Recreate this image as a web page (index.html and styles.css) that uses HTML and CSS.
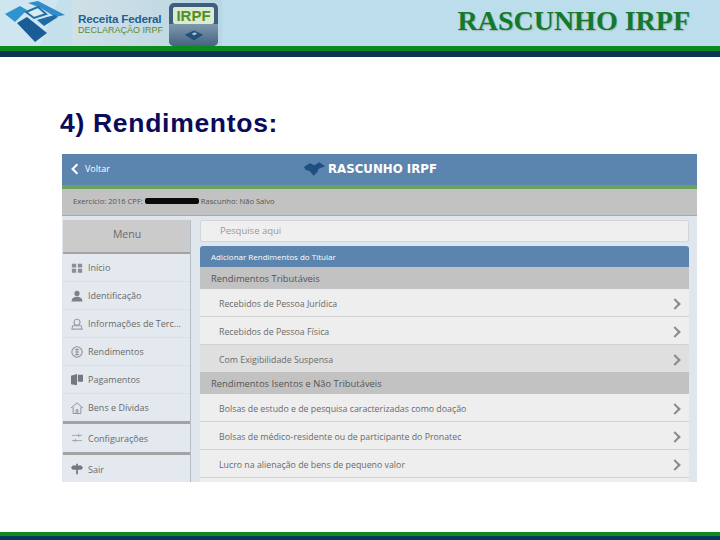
FILE: index.html
```html
<!DOCTYPE html>
<html lang="pt-BR">
<head>
    <meta charset="UTF-8">
    <title>Rascunho IRPF</title>
    <link rel="stylesheet" href="styles.css">
</head>
<body>
    <header class="slide-header">
        <div class="brand">
            <svg class="brand-logo" viewBox="0 0 72 46">
                <polygon points="58,0 72,0 72,46 40,46" fill="#c4e0ec"/>
                <polygon points="5,14 20,6 27,10 15,22" fill="#2f93cf"/>
                <polygon points="28,3 38,1 65,15 55,17 41,8" fill="#2f8cc8"/>
                <polygon points="26,12 38,7 46,14 34,18" fill="#d8ecf4" stroke="#2470a8" stroke-width="2"/>
                <polygon points="37,20 47,17 55,15 58,17 44,26" fill="#1f6ba6"/>
                <polygon points="17,23 27,17 47,33 35,42" fill="#1a5c96"/>
            </svg>
            <div class="brand-plate">
                <div class="brand-text">
                    <span class="brand-name">Receita Federal</span>
                    <span class="brand-sub">DECLARAÇÃO IRPF</span>
                </div>
                <div class="irpf-badge">
                    <span class="irpf-label">IRPF</span>
                    <span class="irpf-base">
                        <svg viewBox="0 0 24 12" width="20" height="11">
                            <polygon points="1,5 12,0 23,5 12,12" fill="#234f78"/>
                            <polygon points="9,4 13,2 16,4 12,6" fill="#a9c0d2"/>
                        </svg>
                    </span>
                </div>
            </div>
        </div>
        <div class="slide-title">RASCUNHO IRPF</div>
    </header>
    <div class="stripe"></div>

    <main class="slide-body">
        <h1 class="heading">4) Rendimentos:</h1>

        <div class="shot">
            <div class="app-bar">
                <div class="back">
                    <svg viewBox="0 0 10 14" width="8" height="12"><path d="M8 1 L2 7 L8 13" fill="none" stroke="#fff" stroke-width="2.6"/></svg>
                    <span>Voltar</span>
                </div>
                <div class="app-title">
                    <svg viewBox="0 0 24 16" width="23" height="16">
                        <polygon points="1,6 7,2 12,4 17,1 23,5 16,8 15,11 11,15 7,10 3,9" fill="#1f4f82"/>
                    </svg>
                    <span>RASCUNHO IRPF</span>
                </div>
            </div>
            <div class="info-bar">
                <span>Exercício: 2016 CPF:</span>
                <span class="redacted"></span>
                <span>Rascunho: Não Salvo</span>
            </div>

            <div class="app-main">
                <nav class="side">
                    <div class="side-head">Menu</div>
                    <a class="side-item">
                        <svg class="side-icon" viewBox="0 0 14 14"><path d="M1 2h5v4.500H1zM8 2h5v4.500H8zM1 8h5v4.500H1zM8 8h5v4.500H8z" fill="#8a8f94"/></svg>
                        Início
                    </a>
                    <a class="side-item">
                        <svg class="side-icon" viewBox="0 0 14 14"><circle cx="7" cy="4" r="3" fill="#7d8288"/><path d="M0.500 13.500 L1.500 10 L5 8 H9 L12.500 10 L13.500 13.500Z" fill="#7d8288"/></svg>
                        Identificação
                    </a>
                    <a class="side-item">
                        <svg class="side-icon" viewBox="0 0 14 14"><circle cx="7" cy="5" r="3.500" fill="none" stroke="#9a9fa4" stroke-width="1.300"/><path d="M1 13 L2 9 H12 L13 13Z" fill="none" stroke="#9a9fa4" stroke-width="1.300"/></svg>
                        Informações de Terc...
                    </a>
                    <a class="side-item">
                        <svg class="side-icon" viewBox="0 0 14 14"><circle cx="7" cy="7" r="6" fill="none" stroke="#8a8f94" stroke-width="1.200"/><path d="M4.500 4h5M4.500 7h5M4.500 10h5M7 3v8" stroke="#8a8f94" stroke-width="1.100"/></svg>
                        Rendimentos
                    </a>
                    <a class="side-item">
                        <svg class="side-icon" viewBox="0 0 14 14"><path d="M0 2 L7 0 V13 L0 12Z M8 1 H14 V9 H8Z" fill="#74797e"/></svg>
                        Pagamentos
                    </a>
                    <a class="side-item side-item-last">
                        <svg class="side-icon" viewBox="0 0 14 14"><path d="M0 7 L7 1 L14 7 M2.500 6 V13.500 H11.500 V6 M6 13.500 V9 H8 V13.500" fill="none" stroke="#8a8f94" stroke-width="1.100"/></svg>
                        Bens e Dívidas
                    </a>
                    <a class="side-item side-item-ruled">
                        <svg class="side-icon" viewBox="0 0 14 14"><path d="M1 4h12M1 10h12M9 2v4M5 8v4" stroke="#9a9fa4" stroke-width="1"/></svg>
                        Configurações
                    </a>
                    <a class="side-item side-item-end">
                        <svg class="side-icon" viewBox="0 0 14 14"><path d="M6 1h2v2h4l2 2.500L12 8H8v5H6V8H2L0 5.500L2 3h4z" fill="#74797e"/></svg>
                        Sair
                    </a>
                </nav>

                <section class="content">
                    <div class="search">Pesquise aqui</div>
                    <div class="panel-head">Adicionar Rendimentos do Titular</div>
                    <div class="group-head">Rendimentos Tributáveis</div>
                    <div class="row">Recebidos de Pessoa Jurídica<span class="chevron"></span></div>
                    <div class="row">Recebidos de Pessoa Física<span class="chevron"></span></div>
                    <div class="row row-dim">Com Exigibilidade Suspensa<span class="chevron"></span></div>
                    <div class="group-head">Rendimentos Isentos e Não Tributáveis</div>
                    <div class="row">Bolsas de estudo e de pesquisa caracterizadas como doação<span class="chevron"></span></div>
                    <div class="row">Bolsas de médico-residente ou de participante do Pronatec<span class="chevron"></span></div>
                    <div class="row">Lucro na alienação de bens de pequeno valor<span class="chevron"></span></div>
                    <div class="row"></div>
                </section>
            </div>
        </div>
    </main>

    <div class="stripe stripe-foot"></div>
</body>
</html>
```

FILE: styles.css
```css
* {
    box-sizing: border-box;
}
html, body {
    margin: 0;
    padding: 0;
    height: 540px;
    overflow: hidden;
    background-color: #ffffff;
    font-family: "Liberation Sans", Arial, sans-serif;
}
body {
    display: flex;
    flex-direction: column;
}
.slide-header {
    height: 46px;
    display: flex;
    justify-content: space-between;
    background-color: #bcdeec;
}
.brand {
    display: flex;
}
.brand-logo {
    width: 72px;
    height: 46px;
    background-color: #cfe6f0;
}
.brand-plate {
    width: 150px;
    display: flex;
    align-items: center;
    padding-left: 6px;
    gap: 7px;
    background: linear-gradient(90deg, #d0e0e7, #b9d6e2);
}
.brand-text {
    width: 84px;
    display: flex;
    flex-direction: column;
    white-space: nowrap;
    padding-top: 1px;
}
.brand-name {
    font-size: 11.7px;
    font-weight: bold;
    color: #1f5f93;
    letter-spacing: -0.2px;
}
.brand-sub {
    font-size: 9px;
    color: #5c8a2e;
}
.irpf-badge {
    width: 49px;
    height: 43px;
    margin-top: 3px;
    border-radius: 5px;
    overflow: hidden;
    display: flex;
    flex-direction: column;
    background-color: #3f5f7f;
}
.irpf-label {
    margin: 4px 4px 0;
    height: 17px;
    border-radius: 2px;
    text-align: center;
    background-color: #dcebd0;
    color: #4f8f25;
    font-size: 15px;
    font-weight: bold;
    line-height: 17px;
}
.irpf-base {
    flex: 1;
    display: flex;
    justify-content: center;
    align-items: center;
    background: linear-gradient(#7f98ae, #45647f);
}
.slide-title {
    padding: 5px 30px 0 0;
    font-family: "Liberation Serif", "Times New Roman", serif;
    font-size: 28px;
    font-weight: bold;
    color: #13792d;
    text-shadow: 1px 1px 1px #9fb6b5;
    white-space: nowrap;
}
.stripe {
    height: 11px;
    background: linear-gradient(#0b8a1d 0 5px, #0a3558 5px);
}
.stripe-foot {
    height: 8px;
    margin-top: auto;
    background: linear-gradient(#0b8a1d 0 4px, #0a3558 4px);
}
.slide-body {
    padding: 0 23px 0 62px;
}
.heading {
    margin: 50px 0 15px -2px;
    height: 32px;
    font-size: 26.5px;
    font-weight: bold;
    line-height: 32px;
    letter-spacing: 0.7px;
    color: #0b0b5c;
}
.shot {
    height: 328px;
    overflow: hidden;
    display: flex;
    flex-direction: column;
    background-color: #dfe6ee;
    font-family: "Open Sans", sans-serif;
    color: #6a6a6a;
    font-size: 10px;
}
.app-bar {
    height: 35px;
    flex-shrink: 0;
    display: flex;
    align-items: center;
    padding-bottom: 2px;
    background-color: #5b84ae;
    border-bottom: 4px solid #6aa35c;
    color: #fff;
}
.back {
    display: flex;
    align-items: center;
    gap: 6px;
    padding-left: 9px;
    font-size: 9px;
}
.app-title {
    margin-left: 193px;
    display: flex;
    align-items: center;
    gap: 2px;
    font-family: "DejaVu Sans", sans-serif;
    font-size: 11.8px;
    font-weight: bold;
}
.info-bar {
    height: 27px;
    flex-shrink: 0;
    display: flex;
    align-items: center;
    gap: 2px;
    padding: 0 0 3px 11px;
    background-color: #c2c2c2;
    border-bottom: 1px solid #a9a9a9;
    font-size: 7.6px;
    color: #555;
}
.redacted {
    width: 54px;
    height: 6px;
    border-radius: 2px;
    background-color: #0a0a0a;
}
.app-main {
    flex: 1;
    display: flex;
    gap: 9px;
    padding: 4px 8px 0 1px;
}
.side {
    width: 128px;
    flex-shrink: 0;
    border-right: 1px solid #b7bec5;
    background-color: #e3e9ef;
}
.side-head {
    height: 34px;
    border-bottom: 2px solid #a3a3a3;
    background-color: #cbcbcb;
    text-align: center;
    font-size: 10.5px;
    line-height: 28px;
    padding-left: 1px;
}
.side-item {
    height: 28px;
    display: flex;
    align-items: center;
    gap: 5px;
    padding-left: 8px;
    border-bottom: 1px solid #d9e0e7;
    font-size: 9px;
    white-space: nowrap;
}
.side-item-last {
    height: 30px;
    border-bottom: 3px solid #a3a3a3;
}
.side-item-ruled {
    height: 31px;
    border-bottom: 3px solid #a3a3a3;
}
.side-item-end {
    border-bottom: none;
}
.side-icon {
    width: 12px;
    height: 12px;
    flex-shrink: 0;
}
.content {
    flex: 1;
    min-width: 0;
}
.search {
    height: 22px;
    margin-bottom: 4px;
    padding-left: 19px;
    border: 1px solid #d5d5d5;
    border-radius: 2px;
    background-color: #efefef;
    font-size: 9.5px;
    line-height: 20px;
    color: #999;
}
.panel-head {
    height: 21px;
    padding: 5px 0 0 11px;
    border-radius: 3px 3px 0 0;
    background-color: #5b84ae;
    color: #fff;
    font-size: 8px;
}
.group-head {
    height: 22px;
    padding-left: 11px;
    background-color: #c2c2c2;
    font-size: 9.4px;
    line-height: 23px;
    color: #555;
}
.row {
    height: 28px;
    display: flex;
    align-items: center;
    justify-content: space-between;
    padding: 3px 8px 0 19px;
    background-color: #eeeeee;
    border-bottom: 1px solid #d2d2d2;
    font-size: 8.8px;
}
.row-dim {
    height: 27px;
    border-bottom: none;
    background-color: #dfdfdf;
}
.chevron {
    width: 8px;
    height: 8px;
    margin-right: 2px;
    border-top: 2px solid #8b8b8b;
    border-right: 2px solid #8b8b8b;
    transform: rotate(45deg);
}
```
